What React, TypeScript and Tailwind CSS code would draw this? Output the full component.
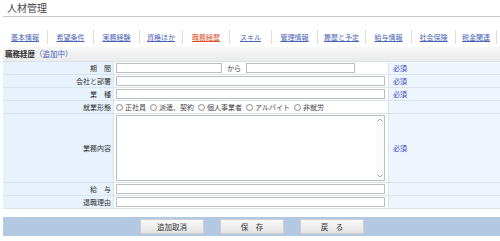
const tabs = [
  { label: "基本情報", w: "w-[45px]" },
  { label: "希望条件", w: "w-[46px]" },
  { label: "実務経験", w: "w-[46px]" },
  { label: "資格ほか", w: "w-[43px]" },
  { label: "職務経歴", w: "w-[47px]", active: true },
  { label: "スキル", w: "w-[42px]" },
  { label: "管理情報", w: "w-[46px]" },
  { label: "履歴と予定", w: "w-[48px]" },
  { label: "給与情報", w: "w-[46px]" },
  { label: "社会保険", w: "w-[44px]" },
  { label: "税金関連", w: "w-[41px]" },
];

const radios = ["正社員", "派遣、契約", "個人事業者", "アルバイト", "非就労"];

function Row({
  label,
  required,
  children,
  tall,
}: {
  label: string;
  required?: boolean;
  children: React.ReactNode;
  tall?: boolean;
}) {
  return (
    <div className={`flex border-b border-[#d9e3ee] ${tall ? "h-[69px]" : "h-[13px]"}`}>
      <div className="flex w-[110px] items-center justify-end bg-[#e8f2fc] pr-[2px] text-[7px] text-[#333]">
        {label}
      </div>
      <div className="flex w-[275px] items-center border-l border-[#d9e3ee] bg-white pl-[2px] pr-[3px]">
        {children}
      </div>
      <div className="flex flex-1 items-center border-l border-[#d9e3ee] bg-[#eef5fd] pl-[4px] text-[7px] text-[#3344cc]">
        {required && "必須"}
      </div>
    </div>
  );
}

function Btn({ label }: { label: string }) {
  return (
    <button
      type="button"
      className="h-[15px] w-[64px] rounded-[1px] border border-[#cfcfcf] bg-gradient-to-b from-[#fbfbfb] to-[#e2e2e2] text-[7.5px] leading-none text-[#333]"
    >
      {label}
    </button>
  );
}

export default function App() {
  return (
    <div className="h-[241px] w-[500px] overflow-hidden bg-white font-['Noto_Sans_CJK_JP',sans-serif] text-[#333]">
      <div className="ml-[3px] h-[17px] border-b border-[#c8c8c8] pl-[4px] pt-[1px] text-[10px] leading-[13px] text-[#444]">
        人材管理
      </div>

      <div className="ml-[3px] mt-[13px] flex h-[14px]">
        {tabs.map((t) => (
          <div
            key={t.label}
            className={`flex ${t.w} items-center justify-center border-r border-[#dcdce4] text-[7px] underline decoration-[0.5px] underline-offset-[1px] ${
              t.active ? "text-[#e0502a]" : "text-[#4a64b8]"
            }`}
          >
            {t.label}
          </div>
        ))}
      </div>

      <div className="ml-[3px] mt-[3px] flex h-[14px] items-center bg-gradient-to-b from-[#f8f8f8] to-[#ebebeb] pl-[2px] text-[7.5px]">
        <span className="font-bold text-[#333]">職務経歴</span>
        <span className="text-[#3a5cc0]">（追加中）</span>
      </div>

      <div className="ml-[3px] border-t border-[#d9e3ee]">
        <Row label="期　間" required>
          <input className="h-[10px] w-[106px] border border-[#bdbdbd] bg-white outline-none" />
          <span className="mx-[5px] text-[7px] text-[#444]">から</span>
          <input className="h-[10px] w-[109px] border border-[#bdbdbd] bg-white outline-none" />
        </Row>
        <Row label="会社と部署" required>
          <input className="h-[10px] w-full border border-[#bdbdbd] bg-white outline-none" />
        </Row>
        <Row label="業　種" required>
          <input className="h-[10px] w-full border border-[#bdbdbd] bg-white outline-none" />
        </Row>
        <Row label="就業形態">
          <div className="flex items-center gap-[4px] text-[7px] text-[#444]">
            {radios.map((r) => (
              <span key={r} className="flex items-center gap-[2px]">
                <span className="inline-block h-[7px] w-[7px] rounded-full border border-[#888] bg-white" />
                {r}
              </span>
            ))}
          </div>
        </Row>
        <Row label="業務内容" required tall>
          <div className="relative h-[66px] w-full">
            <textarea className="h-full w-full resize-none border border-[#bdbdbd] bg-white outline-none" />
            {/* scrollbar */}
            <div className="absolute right-[1px] top-[1px] bottom-[1px] flex w-[8px] flex-col items-center justify-between bg-[#fafafa] py-[2px] text-[#aaa]">
              <svg width="6" height="4" viewBox="0 0 6 4">
                <path d="M0.5 3.5L3 1L5.5 3.5" fill="none" stroke="currentColor" strokeWidth="1" />
              </svg>
              <svg width="6" height="4" viewBox="0 0 6 4">
                <path d="M0.5 0.5L3 3L5.5 0.5" fill="none" stroke="currentColor" strokeWidth="1" />
              </svg>
            </div>
          </div>
        </Row>
        <Row label="給　与">
          <input className="h-[10px] w-full border border-[#bdbdbd] bg-white outline-none" />
        </Row>
        <Row label="退職理由">
          <input className="h-[10px] w-full border border-[#bdbdbd] bg-white outline-none" />
        </Row>
      </div>

      <div className="ml-[3px] mt-[8px] flex h-[19px] items-center gap-[16px] bg-[#b3c9e2] pl-[137px]">
        <Btn label="追加取消" />
        <Btn label="保　存" />
        <Btn label="戻　る" />
      </div>
    </div>
  );
}
